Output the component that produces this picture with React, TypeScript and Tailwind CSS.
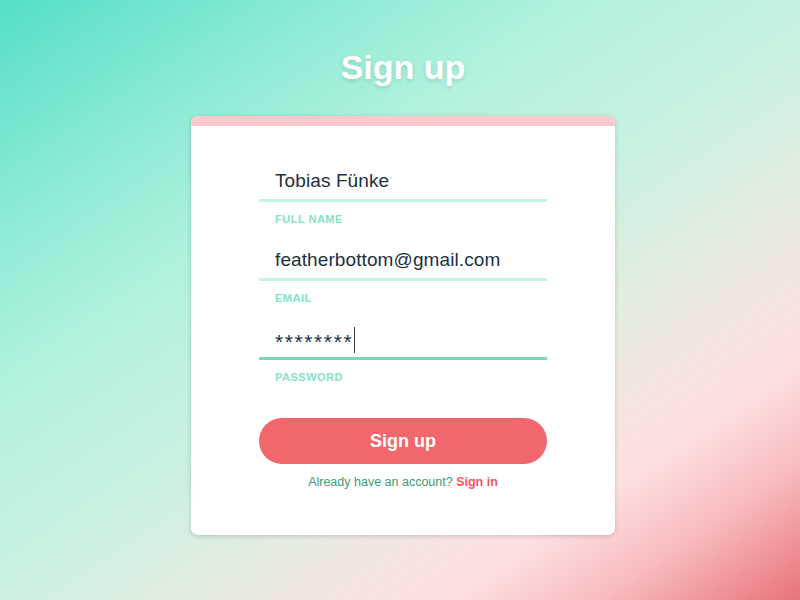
const fieldFont = { fontFamily: "'Liberation Sans', Arial, sans-serif" };

type FieldProps = {
  value: string;
  label: string;
  focused?: boolean;
  secret?: boolean;
};

const Field = ({ value, label, focused, secret }: FieldProps) => {
  return (
    <div className="flex flex-col">
      <div
        className={`flex items-center h-[42px] px-4 pt-[4px] border-b-[3px] ${
          focused ? "border-[#74dbb7]" : "border-[#c3f5e3]"
        }`}
      >
        {secret ? (
          <>
            <span className="text-[21px] leading-[26px] pt-[5px] text-[#1c2f42] tracking-[1.6px]">{value}</span>
            <span className="w-px h-[26px] bg-[#444] ml-[1px]"></span>
          </>
        ) : (
          <span className="text-[19px] text-[#1c2f42] tracking-[0.1px]">{value}</span>
        )}
      </div>
      <span className="px-4 mt-[10px] text-[11px] leading-[14px] font-bold tracking-[0.5px] text-[#85e2c6]">
        {label}
      </span>
    </div>
  );
};

export default function App() {
  return (
    <div
      className="w-[800px] h-[600px] pl-[6px] flex flex-col items-center bg-[linear-gradient(146deg,#55dec7_0%,#8eebd5_20%,#b3f2de_35%,#cbf1e1_52%,#e6ece0_65%,#f6e4e0_73%,#fde0e1_79%,#f8bcbf_88%,#e8737a_100%)]"
      style={fieldFont}
    >
      <h1 className="mt-[45px] text-[34px] leading-[44px] font-bold text-white [text-shadow:0_2px_4px_rgba(0,0,0,0.12)]">
        Sign up
      </h1>

      <div className="mt-[27px] w-[424px] h-[419px] bg-white rounded-[7px] overflow-hidden shadow-[0_1px_5px_rgba(0,0,0,0.18)]">
        <div className="h-[10px] bg-[#fdc9cc]"></div>
        <div className="flex flex-col px-[68px] pt-[34px]">
          <div className="flex flex-col gap-[13px]">
            <Field value="Tobias Fünke" label="FULL NAME" />
            <Field value="featherbottom@gmail.com" label="EMAIL" />
            <Field value="********" label="PASSWORD" focused secret />
          </div>

          <button className="mt-[34px] h-[46px] rounded-full bg-[#f2676c] text-white text-[18px] font-bold">
            Sign up
          </button>

          <p className="mt-[8px] leading-[20px] text-center text-[12.5px] text-[#3b9b7c]">
            Already have an account?{" "}
            <a href="#" className="font-bold text-[#f2565f]">
              Sign in
            </a>
          </p>
        </div>
      </div>
    </div>
  );
}
